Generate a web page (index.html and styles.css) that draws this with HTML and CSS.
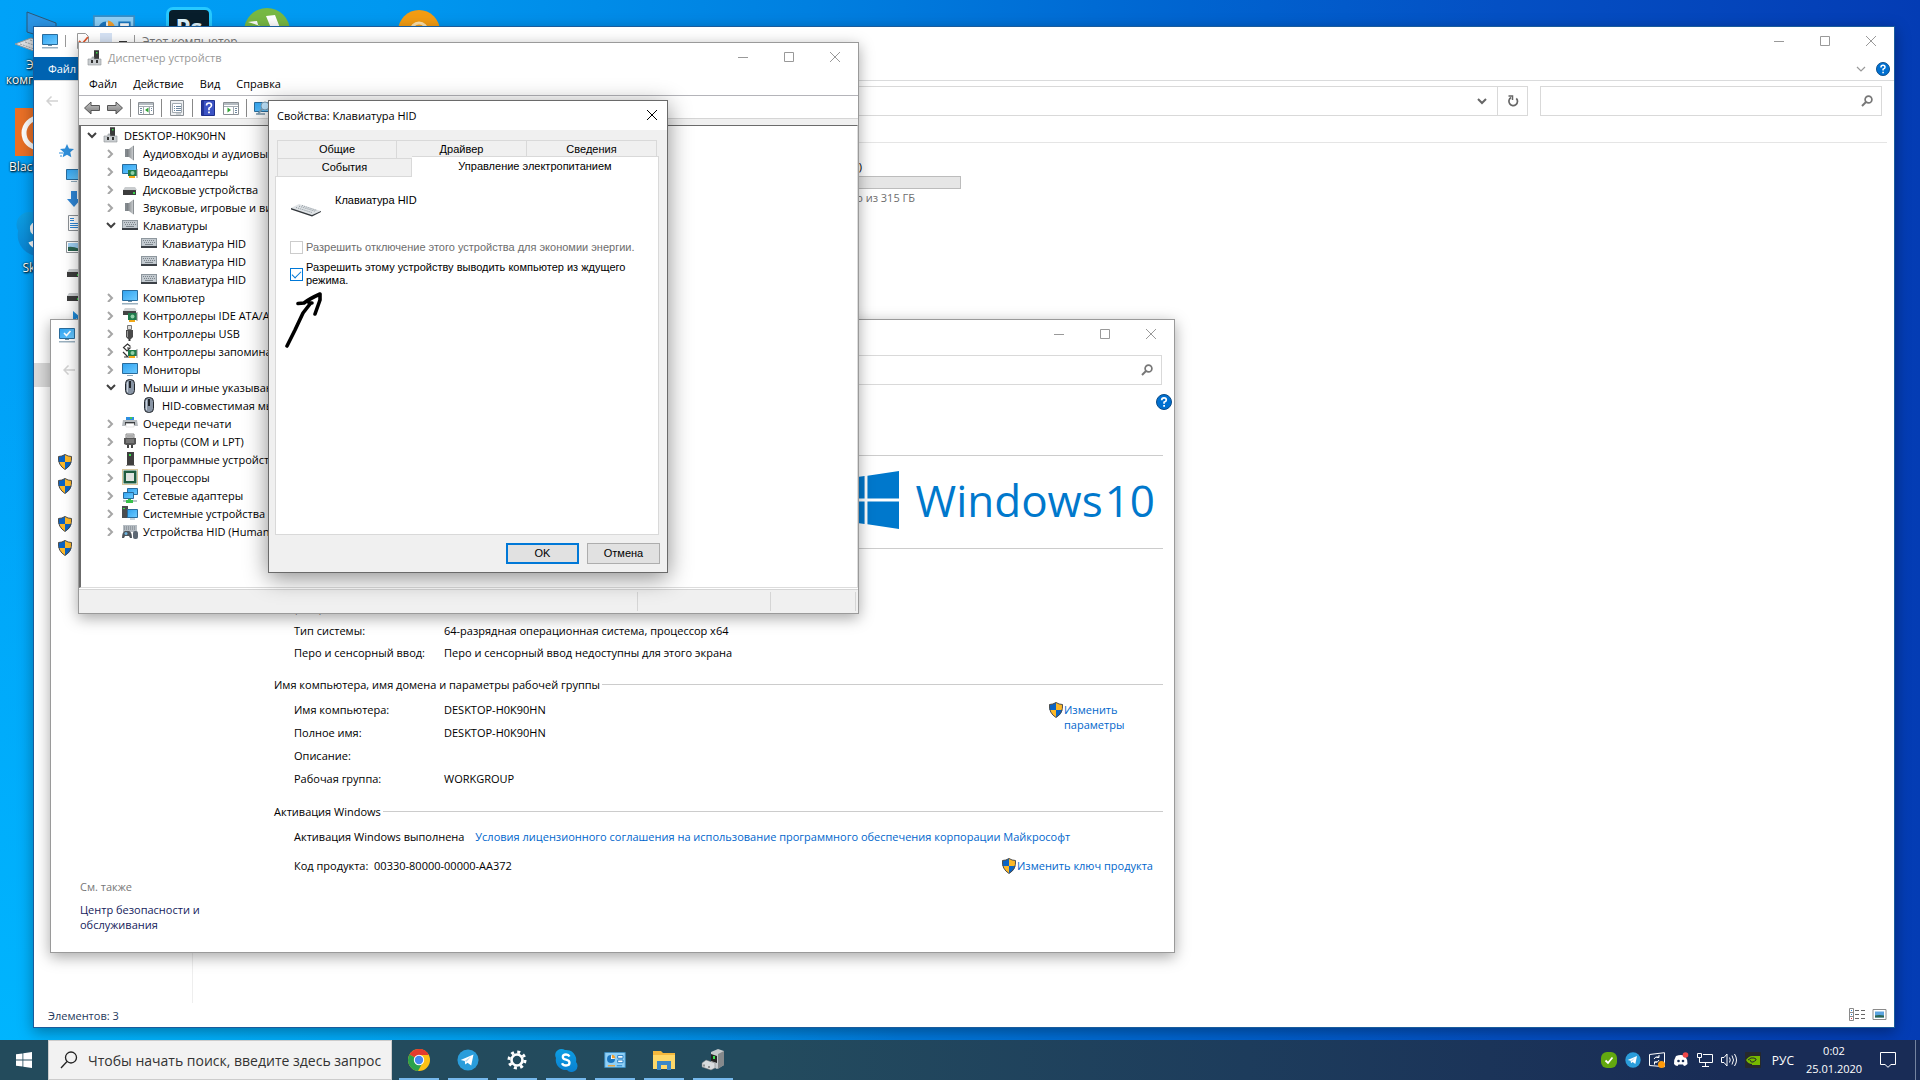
FILE: index.html
```html
<!DOCTYPE html>
<html lang="ru">
<head>
    <meta charset="UTF-8">
    <meta name="viewport" content="width=device-width, initial-scale=1.0">
    <title>Свойства: Клавиатура HID</title>
    <link rel="stylesheet" href="styles.css">
</head>
<body>
    <!-- Набор значков -->
    <svg class="sprite" aria-hidden="true">
        <defs>
            <linearGradient id="screen" x1="0" y1="0" x2="1" y2="1">
                <stop offset="0" stop-color="#2ea2f0"/>
                <stop offset="1" stop-color="#6fcbff"/>
            </linearGradient>
            <linearGradient id="metal" x1="0" y1="0" x2="1" y2="0">
                <stop offset="0" stop-color="#5a5f63"/>
                <stop offset="1" stop-color="#d5d8da"/>
            </linearGradient>
            <linearGradient id="grayArrow" x1="0" y1="0" x2="0" y2="1">
                <stop offset="0" stop-color="#c4c4c4"/>
                <stop offset="1" stop-color="#7a7a7a"/>
            </linearGradient>
            <linearGradient id="skypeBlue" x1="0" y1="0" x2="0" y2="1">
                <stop offset="0" stop-color="#0d9fe4"/>
                <stop offset="1" stop-color="#0a80d0"/>
            </linearGradient>
        </defs>
        <symbol id="i-min" viewBox="0 0 10 10"><path d="M0 5.500h10" stroke="currentColor" fill="none"/></symbol>
        <symbol id="i-max" viewBox="0 0 10 10"><path d="M.5.5h9v9h-9z" stroke="currentColor" fill="none"/></symbol>
        <symbol id="i-close" viewBox="0 0 10 10"><path d="M0 0l10 10M10 0L0 10" stroke="currentColor" fill="none"/></symbol>
        <symbol id="i-right" viewBox="0 0 10 10"><path d="M2 2l4 4-4 4" stroke="#a6a6a6" stroke-width="2" fill="none"/></symbol>
        <symbol id="i-down" viewBox="0 0 10 10"><path d="M1 3l4 4 4-4" stroke="currentColor" stroke-width="2" fill="none"/></symbol>
        <symbol id="i-chev" viewBox="0 0 10 10"><path d="M1 3l4 4 4-4" stroke="currentColor" stroke-width="1.2" fill="none"/></symbol>
        <symbol id="i-back" viewBox="0 0 12 10"><path d="M12 5H1M5.500.500L1 5l4.500 4.500" stroke="#d2d2d2" stroke-width="1.500" fill="none"/></symbol>
        <symbol id="i-find" viewBox="0 0 12 12"><circle cx="7.500" cy="4.500" r="3.400" stroke="#777" stroke-width="1.700" fill="none"/><path d="M5 7L1 11" stroke="#777" stroke-width="2"/></symbol>
        <symbol id="i-help" viewBox="0 0 16 16"><circle cx="8" cy="8" r="7.500" fill="#0070d0" stroke="#0a4a86"/><path d="M5.700 6.200Q5.700 3.800 8 3.800t2.300 2.100Q10.300 7.400 8.100 8.200v1.500" stroke="#fff" stroke-width="1.700" fill="none"/><path d="M7.200 11h1.800v1.800H7.200z" fill="#fff"/></symbol>
        <symbol id="i-refresh" viewBox="0 0 12 12"><path d="M4 2.600A4.300 4.300 0 1 0 9.300 3.300" stroke="#666" stroke-width="1.700" fill="none"/><path d="M1.500 1h4v4" stroke="#666" stroke-width="1.500" fill="none"/></symbol>
        <symbol id="i-devmgr" viewBox="0 0 16 16"><path d="M7 0h5v10H7z" fill="#3a3a3a"/><path d="M7 0h5v1H7z" fill="#6a6a6a"/><path d="M9 2h1.500v1.500H9z" fill="#3be04b"/><path d="M1 9h4V7h2v2h7v6H1z" fill="#c9cdd0" stroke="#8d9194" stroke-width=".6"/><path d="M4 10h2v3H4zM9 10h2v3H9z" fill="#333"/></symbol>
        <symbol id="i-speaker" viewBox="0 0 16 16"><path d="M3 4h4l5-4v16l-5-4H3z" fill="url(#metal)"/><path d="M6.500 4v8M11.500 1v14" stroke="#8a8f93" fill="none"/><path d="M3 4h2v8H3z" fill="#83898e"/></symbol>
        <symbol id="i-monitor" viewBox="0 0 16 16"><path d="M.5 2.500h15v10H.5z" fill="url(#screen)" stroke="#2a6c9c"/><path d="M5 14h6v1H5z" fill="#8da9bb"/></symbol>
        <symbol id="i-pc" viewBox="0 0 16 16"><path d="M.5 1.500h15v10H.5z" fill="url(#screen)" stroke="#2a6c9c"/><path d="M6 12h4v1H6z" fill="#6f8fa3"/><path d="M0 14h16v1.500H0z" fill="#9ab0bf"/></symbol>
        <symbol id="i-pccheck" viewBox="0 0 16 16"><path d="M.5 1.500h15v10H.5z" fill="url(#screen)" stroke="#2a6c9c"/><path d="M5 6l2.500 2.500L11.500 4" stroke="#fff" stroke-width="1.600" fill="none"/><path d="M6 12h4v1H6z" fill="#6f8fa3"/><path d="M0 14h16v1.500H0z" fill="#9ab0bf"/></symbol>
        <symbol id="i-video" viewBox="0 0 16 16"><path d="M.5 1.500h14v9H.5z" fill="url(#screen)" stroke="#2a6c9c"/><path d="M6 7h9v6H6z" fill="#1f7a4b"/><circle cx="10.500" cy="10" r="2" fill="#8fd0a8"/><path d="M15 6v9" stroke="#888"/><path d="M7 13h6v2H7z" fill="#f0a818"/></symbol>
        <symbol id="i-disk" viewBox="0 0 16 16"><path d="M3 6h10l2 3H1z" fill="#c9ccce"/><path d="M1 9h13v5H1z" fill="#3c3c3c"/><path d="M11 11h2v2h-2z" fill="#38d048"/></symbol>
        <symbol id="i-kbd" viewBox="0 0 16 16"><path d="M0 3h16v8H0z" fill="#c3cad0"/><path d="M0 11h16v2H0z" fill="#3b4046"/><path d="M.5 3v8M15.500 3v8M0 3.500h16" stroke="#8e979e"/><path d="M2 5.500h12M3 7.500h11" stroke="#7c858c" stroke-dasharray="1 1"/><path d="M4 9.500h8" stroke="#7c858c"/></symbol>
        <symbol id="i-ide" viewBox="0 0 16 16"><path d="M3 1h10l2 3H1z" fill="#d0d3d5"/><path d="M1 4h13v4H1z" fill="#444"/><path d="M6 6h9v7H6z" fill="#1f7a4b"/><circle cx="10.500" cy="9.500" r="2" fill="#8fd0a8"/><path d="M15 5v9" stroke="#888"/><path d="M7 13h6v2H7z" fill="#f0a818"/></symbol>
        <symbol id="i-usb" viewBox="0 0 16 16"><path d="M5.500.5h4v4h-4z" fill="#ddd" stroke="#777"/><path d="M4 5h7v7L9 14H6l-2-2z" fill="#4a4a4a"/><path d="M5.500 6v6" stroke="#999"/><path d="M6.500 14h2v2h-2z" fill="#333"/></symbol>
        <symbol id="i-storage" viewBox="0 0 16 16"><path d="M8.500 3.500L5.500 1 1.500 4.500 5 8l3-3H5M1 9l5 5H2" stroke="#333" stroke-width="1.200" fill="none"/><path d="M6 7h9v6H6z" fill="#1f7a4b"/><circle cx="10.500" cy="10" r="2" fill="#8fd0a8"/><path d="M15 6v9" stroke="#888"/><path d="M7 13h6v2H7z" fill="#f0a818"/></symbol>
        <symbol id="i-mouse" viewBox="0 0 16 16"><rect x="3.500" y=".5" width="9" height="15" rx="4" fill="#8995a5" stroke="#22262b"/><path d="M5.500 3v10" stroke="#c8d0d9"/><rect x="7" y="2" width="2" height="7" fill="#22262b"/></symbol>
        <symbol id="i-printer" viewBox="0 0 16 16"><path d="M4 2h8v3H4z" fill="#2d8fe0"/><path d="M8 2h2v2H8z" fill="#45c94f"/><path d="M1 5h14l1 6H0z" fill="#b6bbbf"/><path d="M3 7h10v3H3z" fill="#3a3d40"/><path d="M4 8.500h8V12H4z" fill="#fff" stroke="#ccc" stroke-width=".5"/></symbol>
        <symbol id="i-port" viewBox="0 0 16 16"><path d="M4 1h8v4H4z" fill="#e4e4e4" stroke="#888"/><path d="M6 2v2M8 2v2M10 2v2" stroke="#777"/><path d="M2 5h12v6l-2 1H4l-2-1z" fill="#555"/><path d="M4 7h8M4 9h8" stroke="#999"/><path d="M5 12h2v3H5zM9 12h2v3H9z" fill="#444"/></symbol>
        <symbol id="i-soft" viewBox="0 0 16 16"><path d="M5 1h7v13H5z" fill="#3f3f3f"/><path d="M7 3h2v2H7z" fill="#3be04b"/><path d="M4 14h9v1H4z" fill="#999"/></symbol>
        <symbol id="i-cpu" viewBox="0 0 16 16"><path d="M.5.5h15v15H.5z" fill="none" stroke="#b0903a" stroke-dasharray="1 1"/><path d="M1.500 1.500h13v13h-13z" fill="#1f5c40"/><path d="M4 4h8v8H4z" fill="#dfe3e0"/></symbol>
        <symbol id="i-net" viewBox="0 0 16 16"><path d="M5.500 1.500h10v6h-10z" fill="url(#screen)" stroke="#2a6c9c"/><path d="M1.500 5.500h10v6h-10z" fill="url(#screen)" stroke="#2a6c9c"/><path d="M1 14h14" stroke="#b9c4c9" stroke-width="2"/><path d="M6 12h3v1h2v3H4v-3h2z" fill="#38c04a"/></symbol>
        <symbol id="i-system" viewBox="0 0 16 16"><path d="M0 1h6v12H0z" fill="#4a4d50"/><path d="M1 3h2v1H1z" fill="#3be04b"/><path d="M5.500 4.500h10v8h-10z" fill="url(#screen)" stroke="#2a6c9c"/><path d="M8 14h5" stroke="#8da9bb"/></symbol>
        <symbol id="i-hid" viewBox="0 0 16 16"><path d="M1 2h14v7H1z" fill="#b6bdc3"/><path d="M2 4h12M2 6h12" stroke="#737b82" stroke-dasharray="1 1"/><path d="M0 15q0-6 3-7h4q3 1 3 7H8l-1-2H3l-1 2z" fill="#4d545b"/><circle cx="4" cy="10.500" r="1.500" fill="#6cb2dc"/><rect x="11" y="8" width="5" height="8" rx="2" fill="#5d6874"/></symbol>
        <symbol id="i-shield" viewBox="0 0 16 16"><path d="M8 .5q3 2 6.500 2Q15.300 11 8 15.500.7 11 1.500 2.500 5 2.500 8 .5z" fill="#fdb827"/><path d="M8 .5V8H1.500q-.4-3 0-5.500Q5 2.500 8 .5zM8 8h6.500Q13.500 12.500 8 15.500z" fill="#0a63c4"/><path d="M8 .5q3 2 6.500 2Q15.300 11 8 15.500.7 11 1.500 2.500 5 2.500 8 .5z" fill="none" stroke="#4d4d4d"/></symbol>
        <symbol id="i-tarrow" viewBox="0 0 16 16"><path d="M.5 8L7 2v3.500h8.500v5H7V14z" fill="url(#grayArrow)" stroke="#555"/></symbol>
        <symbol id="i-panel" viewBox="0 0 16 16"><path d="M.5 2.500h15v12H.5z" fill="#fff" stroke="#8a8f94"/><path d="M1 3h14v2H1z" fill="#b5bcc2"/><path d="M1 6.500h14M5.500 6v8M11.500 6v8" stroke="#a3abb2"/><path d="M2 8.500h2M2 10.500h2M2 12.500h2M13 8.500h1M13 10.500h1" stroke="#6f88a0"/><path d="M10.500 7.500v5L7 10z" fill="#2fa534"/></symbol>
        <symbol id="i-panel2" viewBox="0 0 16 16"><path d="M.5 2.500h15v12H.5z" fill="#fff" stroke="#8a8f94"/><path d="M1 3h14v2H1z" fill="#b5bcc2"/><path d="M1 6.500h14M10.500 6v8" stroke="#a3abb2"/><path d="M12 8.500h2M12 10.500h2M12 12.500h2" stroke="#6f88a0"/><path d="M4.500 7.500v5L8 10z" fill="#2fa534"/></symbol>
        <symbol id="i-props" viewBox="0 0 16 16"><path d="M1.500.5h13v15h-13z" fill="#eef0f2" stroke="#8a8f94"/><path d="M3.500 3.500h9v9h-9z" fill="#fff" stroke="#a3abb2"/><path d="M5 6.500h1M7 6.500h5M5 8.500h1M7 8.500h5M5 10.500h1M7 10.500h5" stroke="#6f88a0"/><path d="M7 14h5" stroke="#a3abb2"/></symbol>
        <symbol id="i-book" viewBox="0 0 14 16"><path d="M.5.500h13v15H.5z" fill="#3b53c4" stroke="#1e2f8c"/><path d="M1 1h2v14H1z" fill="#23369b"/><path d="M5.500 5.500Q5.500 3 8 3t2.500 2.300Q10.500 7 8 8.200v2" stroke="#fff" stroke-width="1.600" fill="none"/><path d="M7.100 11.500h1.800v1.800H7.100z" fill="#fff"/></symbol>
        <symbol id="i-scan" viewBox="0 0 16 16"><path d="M.5 2.500h15v9H.5z" fill="url(#screen)" stroke="#2a6c9c"/><path d="M2 14h9" stroke="#9ab0bf" stroke-width="2"/><circle cx="11" cy="6" r="4" fill="#bfe6ff" stroke="#7d9db2"/><path d="M8 9l-4 5" stroke="#7d9db2" stroke-width="2"/></symbol>
        <symbol id="i-doccheck" viewBox="0 0 12 16"><path d="M.5.5h8l3 3v12H.5z" fill="#fff" stroke="#999"/><path d="M2 8l3 3 6-7" stroke="#e0562b" stroke-width="1.800" fill="none"/></symbol>
        <symbol id="i-star" viewBox="0 0 16 16"><path d="M8 1l2 4.500 5 .500-3.700 3.300 1 5L8 11.700 3.700 14.300l1-5L1 6l5-.500z" fill="#2f8fdb"/><path d="M0 10h4M1 13h2" stroke="#2f8fdb"/></symbol>
        <symbol id="i-dl" viewBox="0 0 16 16"><path d="M5 0h6v8h4l-7 8-7-8h4z" fill="#2f86d6"/></symbol>
        <symbol id="i-doc" viewBox="0 0 16 16"><path d="M2.500.5h11v15h-11z" fill="#fff" stroke="#8a8f94"/><path d="M4 3.500h4M4 5.500h4M4 8.500h8M4 10.500h8M4 12.500h8" stroke="#2f86d6"/></symbol>
        <symbol id="i-pic" viewBox="0 0 16 16"><path d="M.5 2.500h15v11H.5z" fill="#fff" stroke="#8a8f94"/><path d="M2 4h12v8H2z" fill="#9fd0f4"/><path d="M2 12V8q4-1 12 2v2z" fill="#2c6450"/></symbol>
        <symbol id="i-note" viewBox="0 0 16 16"><path d="M7 0l7 6v5l-4-4v9H7z" fill="#1f8fe0"/></symbol>
        <symbol id="i-folder" viewBox="0 0 24 20"><path d="M1 1h8l2 2h12v16H1z" fill="#f5b83d"/><path d="M1 5h22v14H1z" fill="#ffd869"/><path d="M5 20v-9h14v9h-4v-5H9v5z" fill="#3a87c8"/></symbol>
        <symbol id="i-skype" viewBox="0 0 24 24"><path d="M7 1a6 6 0 0 1 4 1 10 10 0 0 1 11 12 6 6 0 0 1-9 8A10 10 0 0 1 2 10 6 6 0 0 1 7 1z" fill="url(#skypeBlue)"/><path d="M15.500 8.500Q14.500 6.500 12 6.500 8.800 6.500 8.800 9q0 2 3.200 2.700 3.500.8 3.500 3.100 0 2.700-3.500 2.700-3 0-4-2.300" stroke="#fff" stroke-width="2.300" fill="none"/></symbol>
        <symbol id="i-telegram" viewBox="0 0 24 24"><circle cx="12" cy="12" r="11.500" fill="#2a9ddb"/><path d="M4 12l14-6-2.500 12-4-3-2.500 2-.500-4z" fill="#fff"/><path d="M8.500 13l7-5-5 6" fill="#b8d9ee"/></symbol>
        <symbol id="i-win" viewBox="0 0 16 16"><path d="M0 2.300L6.500 1.400v6.200H0zM7.300 1.300L16 0v7.600H7.300zM0 8.400h6.500v6.200L0 13.700zM7.300 8.400H16V16l-8.700-1.300z" fill="currentColor"/></symbol>
        <symbol id="i-cpl" viewBox="0 0 24 18"><path d="M.5.5h23v17H.5z" fill="#8fd0f7" stroke="#3a8fc6"/><circle cx="7.500" cy="8" r="4" fill="#fff"/><path d="M7.500 8V3.500A4.500 4.500 0 1 0 12 8z" fill="#1b76bf"/><path d="M8.500 3a4.500 4.500 0 0 1 4 4h-4z" fill="#f0a030"/><path d="M15 4h6v3h-6zM15 9h6v3h-6z" fill="#fff" stroke="#1b76bf"/><path d="M4 15.500h8" stroke="#f0a030" stroke-width="1.500"/><path d="M14 15.500h6" stroke="#1b76bf"/></symbol>
    </svg>

    <div class="desktop">
        <!-- Ярлыки рабочего стола -->
        <div class="shortcut this-pc">
            <svg width="48" height="44" viewBox="0 0 48 44"><path d="M12 2l29 11v18L12 22z" fill="#2b95e6" stroke="#2d5878"/><path d="M0 34l16-6 24 8-16 7z" fill="#dfe3e6" stroke="#8e979e"/><path d="M5 34l20 7M10 32l20 7M15 30l20 7" stroke="#9aa3aa" stroke-dasharray="2 1"/></svg>
            <span>Этот<br>компьютер</span>
        </div>
        <div class="shortcut blackberry">
            <svg width="48" height="48" viewBox="0 0 48 48"><path d="M0 0h48v48H0z" fill="#ea7026"/><circle cx="24" cy="25" r="15" fill="none" stroke="#fff" stroke-width="5"/></svg>
            <span>BlackBerry</span>
        </div>
        <div class="shortcut skype">
            <svg width="50" height="50"><use href="#i-skype"/></svg>
            <span>Skype</span>
        </div>
        <div class="shortcut top-row">
            <svg width="42" height="32"><use href="#i-cpl"/></svg>
            <span class="ps">Ps</span>
            <svg width="48" height="48" viewBox="0 0 48 48"><circle cx="24" cy="24" r="23" fill="#77b843"/><path d="M5 15l9-1 4 14 12-2-7-17 9-1 7 18" fill="#fff"/></svg>
            <svg width="44" height="44" viewBox="0 0 44 44"><circle cx="22" cy="22" r="21" fill="#f39c12"/><circle cx="22" cy="22" r="8" fill="#f39c12" stroke="#fde3ae" stroke-width="3"/></svg>
        </div>

        <!-- Проводник -->
        <section class="window explorer">
            <header class="titlebar">
                <div class="quick">
                    <svg width="16" height="16"><use href="#i-pc"/></svg>
                    <i></i>
                    <svg class="qprops" width="12" height="16"><use href="#i-doccheck"/></svg>
                    <b class="newfolder"></b>
                    <b class="dash"></b>
                    <i></i>
                    <span>Этот компьютер</span>
                </div>
                <div class="controls">
                    <button aria-label="Свернуть"><svg><use href="#i-min"/></svg></button>
                    <button aria-label="Развернуть"><svg><use href="#i-max"/></svg></button>
                    <button aria-label="Закрыть"><svg><use href="#i-close"/></svg></button>
                </div>
            </header>
            <div class="ribbon">
                <button class="file">Файл</button>
                <div class="ribbon-end">
                    <svg width="10" height="10"><use href="#i-chev"/></svg>
                    <svg width="14" height="14"><use href="#i-help"/></svg>
                </div>
            </div>
            <div class="address-row">
                <button class="back" aria-label="Назад"><svg width="12" height="10"><use href="#i-back"/></svg></button>
                <div class="address">
                    <button class="drop" aria-label="Предыдущие расположения"><svg width="10" height="10"><use href="#i-down"/></svg></button>
                    <button class="refresh" aria-label="Обновить"><svg width="12" height="12"><use href="#i-refresh"/></svg></button>
                </div>
                <div class="search wide">
                    <input type="text" aria-label="Поиск">
                    <svg width="12" height="12"><use href="#i-find"/></svg>
                </div>
            </div>
            <div class="explorer-body">
                <ul class="nav">
                    <li class="first"><svg width="16" height="16"><use href="#i-star"/></svg></li>
                    <li><svg width="16" height="16"><use href="#i-monitor"/></svg></li>
                    <li><svg width="16" height="16"><use href="#i-dl"/></svg></li>
                    <li><svg width="16" height="16"><use href="#i-doc"/></svg></li>
                    <li><svg width="16" height="16"><use href="#i-pic"/></svg></li>
                    <li><svg width="16" height="16"><use href="#i-disk"/></svg></li>
                    <li><svg width="16" height="16"><use href="#i-disk"/></svg></li>
                    <li><svg width="16" height="16"><use href="#i-note"/></svg></li>
                    <li class="selected"></li>
                </ul>
                <div class="files">
                    <div class="drive">
                        <span class="drive-name">Локальный диск (D:)</span>
                        <div class="bar"></div>
                        <span class="drive-free">Свободно из 315 ГБ</span>
                    </div>
                </div>
            </div>
            <footer class="explorer-status">
                <span>Элементов: 3</span>
                <svg width="40" height="14" viewBox="0 0 40 14"><path d="M.5.500h4v12h-4zM0 4.500h5M0 8.500h5" fill="none" stroke="#8a8a8a"/><path d="M6 2.500h10M6 6.500h10M6 10.500h10" stroke="#666" stroke-dasharray="4 2"/><path d="M2 2h1v1H2zM2 6h1v1H2z" fill="#2f86d6"/><path d="M2 10h1v1H2z" fill="#d33"/><path d="M24 1.500h13v10H24z" fill="#fff" stroke="#8a8a8a"/><path d="M26 3.500h9v6h-9z" fill="#5aa3df"/><path d="M26 9.500v-2q4-1 9 0v2z" fill="#2c6450"/></svg>
            </footer>
        </section>

        <!-- Система -->
        <section class="window system">
            <header class="titlebar">
                <svg class="app" width="16" height="16"><use href="#i-pccheck"/></svg>
                <div class="controls">
                    <button aria-label="Свернуть"><svg><use href="#i-min"/></svg></button>
                    <button aria-label="Развернуть"><svg><use href="#i-max"/></svg></button>
                    <button aria-label="Закрыть"><svg><use href="#i-close"/></svg></button>
                </div>
            </header>
            <div class="system-nav">
                <button class="back" aria-label="Назад"><svg width="12" height="10"><use href="#i-back"/></svg></button>
                <div class="search">
                    <input type="text" aria-label="Поиск в панели управления">
                    <svg width="12" height="12"><use href="#i-find"/></svg>
                </div>
            </div>
            <div class="system-body">
                <aside>
                    <ul class="tasks">
                        <li><svg width="16" height="16"><use href="#i-shield"/></svg></li>
                        <li class="two-line"><svg width="16" height="16"><use href="#i-shield"/></svg></li>
                        <li><svg width="16" height="16"><use href="#i-shield"/></svg></li>
                        <li><svg width="16" height="16"><use href="#i-shield"/></svg></li>
                    </ul>
                    <div class="see-also">
                        <p>См. также</p>
                        <a href="#">Центр безопасности и обслуживания</a>
                    </div>
                </aside>
                <main>
                    <a class="help" href="#" aria-label="Справка"><svg width="16" height="16"><use href="#i-help"/></svg></a>
                    <div class="edition">
                        <svg width="60" height="58"><use href="#i-win"/></svg>
                        <span>Windows<b>10</b></span>
                    </div>
                    <dl class="facts hardware">
                        <dt>Процессор:</dt><dd></dd>
                        <dt class="ram">Установленная память<br>(ОЗУ):</dt><dd></dd>
                        <dt>Тип системы:</dt><dd>64-разрядная операционная система, процессор x64</dd>
                        <dt>Перо и сенсорный ввод:</dt><dd>Перо и сенсорный ввод недоступны для этого экрана</dd>
                    </dl>
                    <h2><span>Имя компьютера, имя домена и параметры рабочей группы</span></h2>
                    <div class="names">
                        <dl class="facts">
                            <dt>Имя компьютера:</dt><dd>DESKTOP-H0K90HN</dd>
                            <dt>Полное имя:</dt><dd>DESKTOP-H0K90HN</dd>
                            <dt>Описание:</dt><dd></dd>
                            <dt>Рабочая группа:</dt><dd>WORKGROUP</dd>
                        </dl>
                        <a class="shield-link" href="#"><svg width="16" height="16"><use href="#i-shield"/></svg><span>Изменить<br>параметры</span></a>
                    </div>
                    <h2><span>Активация Windows</span></h2>
                    <p class="activation">Активация Windows выполнена <a href="#">Условия лицензионного соглашения на использование программного обеспечения корпорации Майкрософт</a></p>
                    <div class="product">
                        <span>Код продукта:&nbsp; 00330-80000-00000-AA372</span>
                        <a class="shield-link" href="#"><svg width="16" height="16"><use href="#i-shield"/></svg><span>Изменить ключ продукта</span></a>
                    </div>
                </main>
            </div>
        </section>

        <!-- Диспетчер устройств -->
        <section class="window devices">
            <header class="titlebar">
                <svg class="app" width="16" height="16"><use href="#i-devmgr"/></svg>
                <h1>Диспетчер устройств</h1>
                <div class="controls">
                    <button aria-label="Свернуть"><svg><use href="#i-min"/></svg></button>
                    <button aria-label="Развернуть"><svg><use href="#i-max"/></svg></button>
                    <button aria-label="Закрыть"><svg><use href="#i-close"/></svg></button>
                </div>
            </header>
            <nav class="menu">
                <button>Файл</button>
                <button>Действие</button>
                <button>Вид</button>
                <button>Справка</button>
            </nav>
            <div class="toolbar">
                <button aria-label="Назад"><svg width="16" height="16"><use href="#i-tarrow"/></svg></button>
                <button class="forward" aria-label="Вперед"><svg width="16" height="16"><use href="#i-tarrow"/></svg></button>
                <i></i>
                <button aria-label="Дерево консоли"><svg width="16" height="16"><use href="#i-panel"/></svg></button>
                <i></i>
                <button aria-label="Свойства"><svg width="16" height="16"><use href="#i-props"/></svg></button>
                <i></i>
                <button aria-label="Справка"><svg width="16" height="16"><use href="#i-book"/></svg></button>
                <button aria-label="Область действий"><svg width="16" height="16"><use href="#i-panel2"/></svg></button>
                <i></i>
                <button aria-label="Обновить конфигурацию"><svg width="16" height="16"><use href="#i-scan"/></svg></button>
            </div>
            <ul class="tree">
                <li class="root"><svg class="tw"><use href="#i-down"/></svg><svg class="ic"><use href="#i-devmgr"/></svg>DESKTOP-H0K90HN</li>
                <li><svg class="tw"><use href="#i-right"/></svg><svg class="ic"><use href="#i-speaker"/></svg>Аудиовходы и аудиовыходы</li>
                <li><svg class="tw"><use href="#i-right"/></svg><svg class="ic"><use href="#i-video"/></svg>Видеоадаптеры</li>
                <li><svg class="tw"><use href="#i-right"/></svg><svg class="ic"><use href="#i-disk"/></svg>Дисковые устройства</li>
                <li><svg class="tw"><use href="#i-right"/></svg><svg class="ic"><use href="#i-speaker"/></svg>Звуковые, игровые и видеоустройства</li>
                <li><svg class="tw"><use href="#i-down"/></svg><svg class="ic"><use href="#i-kbd"/></svg>Клавиатуры</li>
                <li class="leaf"><svg class="ic"><use href="#i-kbd"/></svg>Клавиатура HID</li>
                <li class="leaf"><svg class="ic"><use href="#i-kbd"/></svg>Клавиатура HID</li>
                <li class="leaf"><svg class="ic"><use href="#i-kbd"/></svg>Клавиатура HID</li>
                <li><svg class="tw"><use href="#i-right"/></svg><svg class="ic"><use href="#i-pc"/></svg>Компьютер</li>
                <li><svg class="tw"><use href="#i-right"/></svg><svg class="ic"><use href="#i-ide"/></svg>Контроллеры IDE ATA/ATAPI</li>
                <li><svg class="tw"><use href="#i-right"/></svg><svg class="ic"><use href="#i-usb"/></svg>Контроллеры USB</li>
                <li><svg class="tw"><use href="#i-right"/></svg><svg class="ic"><use href="#i-storage"/></svg>Контроллеры запоминающих устройств</li>
                <li><svg class="tw"><use href="#i-right"/></svg><svg class="ic"><use href="#i-monitor"/></svg>Мониторы</li>
                <li><svg class="tw"><use href="#i-down"/></svg><svg class="ic"><use href="#i-mouse"/></svg>Мыши и иные указывающие устройства</li>
                <li class="leaf"><svg class="ic"><use href="#i-mouse"/></svg>HID-совместимая мышь</li>
                <li><svg class="tw"><use href="#i-right"/></svg><svg class="ic"><use href="#i-printer"/></svg>Очереди печати</li>
                <li><svg class="tw"><use href="#i-right"/></svg><svg class="ic"><use href="#i-port"/></svg>Порты (COM и LPT)</li>
                <li><svg class="tw"><use href="#i-right"/></svg><svg class="ic"><use href="#i-soft"/></svg>Программные устройства</li>
                <li><svg class="tw"><use href="#i-right"/></svg><svg class="ic"><use href="#i-cpu"/></svg>Процессоры</li>
                <li><svg class="tw"><use href="#i-right"/></svg><svg class="ic"><use href="#i-net"/></svg>Сетевые адаптеры</li>
                <li><svg class="tw"><use href="#i-right"/></svg><svg class="ic"><use href="#i-system"/></svg>Системные устройства</li>
                <li><svg class="tw"><use href="#i-right"/></svg><svg class="ic"><use href="#i-hid"/></svg>Устройства HID (Human Interface Devices)</li>
            </ul>
            <footer class="devices-status"><span></span><span></span><span></span></footer>
        </section>

        <!-- Свойства клавиатуры -->
        <section class="window dialog">
            <header class="titlebar">
                <h1>Свойства: Клавиатура HID</h1>
                <div class="controls">
                    <button aria-label="Закрыть"><svg><use href="#i-close"/></svg></button>
                </div>
            </header>
            <div class="tabs back-row">
                <button>Общие</button>
                <button>Драйвер</button>
                <button>Сведения</button>
            </div>
            <div class="tabs front-row">
                <button>События</button>
                <button class="active">Управление электропитанием</button>
            </div>
            <div class="page">
                <div class="device">
                    <svg width="32" height="32" viewBox="0 0 32 32"><path d="M1 12l8-4 22 7-9 4z" fill="#dfe3e6"/><path d="M1 12l21 7 9-4v1l-9 4.500L1 13.500z" fill="#33383d"/><path d="M6 11.500l16 5M9 10.200l16 5M12 9.500l15 5" stroke="#8e979e" stroke-dasharray="1 1"/></svg>
                    <span>Клавиатура HID</span>
                </div>
                <label class="check disabled"><input type="checkbox" disabled><span>Разрешить отключение этого устройства для экономии энергии.</span></label>
                <label class="check"><input type="checkbox" checked><span>Разрешить этому устройству выводить компьютер из ждущего режима.</span></label>
                <svg class="pointer" width="40" height="60" viewBox="0 0 40 60"><path d="M2 54L10 38 18 21 25 12M13 11.500l6-.5Q24 7 35 2M27 11l-3 0M35 2v6l-5 14" fill="none" stroke="#000" stroke-width="3.600" stroke-linecap="round" stroke-linejoin="round"/></svg>
            </div>
            <div class="actions">
                <button class="default">OK</button>
                <button>Отмена</button>
            </div>
        </section>

        <!-- Панель задач -->
        <footer class="taskbar">
            <button class="start" aria-label="Пуск"><svg width="16" height="16"><use href="#i-win"/></svg></button>
            <div class="task-search">
                <svg width="18" height="18" viewBox="0 0 18 18"><circle cx="11" cy="6.500" r="5.500" fill="none" stroke="#222" stroke-width="1.300"/><path d="M7 10.500L1 17" stroke="#222" stroke-width="1.300"/></svg>
                <input type="text" aria-label="Поиск" placeholder="Чтобы начать поиск, введите здесь запрос">
            </div>
            <div class="apps">
                <button aria-label="Chrome"><svg width="22" height="22" viewBox="0 0 22 22"><circle cx="11" cy="11" r="11" fill="#fbc116"/><path d="M11 11L1.500 5.500a11 11 0 0 1 19 0z" fill="#e33b2e"/><path d="M11 11L1.500 5.500A11 11 0 0 0 10 22l5-9z" fill="#2ba24c"/><path d="M11 5.500h9.500L16 13z" fill="#fbc116"/><path d="M11 0v6h9.500A11 11 0 0 0 11 0z" fill="#e33b2e"/><circle cx="11" cy="11" r="5.200" fill="#fff"/><circle cx="11" cy="11" r="4.200" fill="#4588f2"/></svg></button>
                <button aria-label="Telegram"><svg width="22" height="22"><use href="#i-telegram"/></svg></button>
                <button aria-label="Параметры"><svg width="20" height="20" viewBox="0 0 20 20"><circle cx="10" cy="10" r="5.500" fill="none" stroke="#fff" stroke-width="2.600"/><circle cx="10" cy="10" r="8" fill="none" stroke="#fff" stroke-width="3" stroke-dasharray="3 3.283"/></svg></button>
                <button aria-label="Skype"><svg width="24" height="24"><use href="#i-skype"/></svg></button>
                <button aria-label="Панель управления"><svg width="22" height="16"><use href="#i-cpl"/></svg></button>
                <button aria-label="Проводник"><svg width="24" height="20"><use href="#i-folder"/></svg></button>
                <button aria-label="Диспетчер устройств"><svg width="24" height="22" viewBox="0 0 24 22"><path d="M10 3l7-3 6 2v14l-7 4-6-3z" fill="#c6cacd"/><path d="M17 5l6-3v14l-6 4z" fill="#85898c"/><path d="M10 5l6 2v7l-6-2z" fill="#222"/><path d="M12 7h2v3h-2z" fill="#3be04b"/><path d="M1 14l4-3 9 3v5l-4 2-9-3z" fill="#d9dcde" stroke="#777" stroke-width=".5"/><path d="M3 15.500v2M8 17v2" stroke="#777" stroke-width="1.500"/></svg></button>
            </div>
            <div class="tray">
                <svg width="16" height="16" viewBox="0 0 16 16"><rect width="16" height="16" rx="6" fill="#62a80f"/><path d="M4.500 8.500L7 11l4.500-5.500" stroke="#fff" stroke-width="1.800" fill="none"/></svg>
                <svg width="16" height="16"><use href="#i-telegram"/></svg>
                <svg width="16" height="16" viewBox="0 0 16 16"><path d="M.500 2.500L15.500.700v14L.500 13.500z" fill="none" stroke="#fff"/><path d="M5 7q1-3 5-2M10 3v2.500H7.500M10 8q-1 3-4.500 2M5.500 12.500V10H8" fill="none" stroke="#fff"/><circle cx="12.500" cy="12.500" r="3.500" fill="#ff9a0a"/></svg>
                <svg width="16" height="16" viewBox="0 0 16 16"><path d="M3 4q5-2 9 0 3 4 2.500 8-2 2-3.500 2l-1-1.500H5.500l-1 1.500Q2.500 14 1 12 .500 8 3 4z" fill="#fff"/><circle cx="5.500" cy="9" r="1.300" fill="#1b3057"/><circle cx="10" cy="9" r="1.300" fill="#1b3057"/><circle cx="12.500" cy="3" r="2.800" fill="#f04747"/></svg>
                <svg width="16" height="16" viewBox="0 0 16 16"><path d="M6 2.500h9.500v8h-13V7M5 14.500h7M8.500 11v3M.500 1.500h4v4h-4zM2.500 5v2" fill="none" stroke="#fff"/></svg>
                <svg width="16" height="16" viewBox="0 0 16 16"><path d="M.500 5.500h2.500l3-3.500v12l-3-3.500H.500zM8.500 5.500q1.500 2.500 0 5M11 3.500q3 4.500 0 9M13.500 2q4 6 0 12" fill="none" stroke="#fff"/></svg>
                <svg width="16" height="16" viewBox="0 0 16 16"><rect width="16" height="16" rx="1" fill="#26292c"/><path d="M1 8q3-4 6-4V4h8v9H7v-1Q3 12 1 8z" fill="#76b900"/><path d="M3 8q3-3 6-2t2 2-3 2-3-2" fill="none" stroke="#26292c"/></svg>
                <span class="lang">РУС</span>
                <time class="clock">0:02<br>25.01.2020</time>
                <button class="notify" aria-label="Уведомления"><svg width="16" height="16" viewBox="0 0 16 16"><path d="M.500.500h15v12H11L8 15.300 5 12.500H.500z" fill="none" stroke="#fff"/></svg></button>
            </div>
        </footer>
    </div>
</body>
</html>
```
FILE: styles.css
```css
* {
    box-sizing: border-box;
}
body {
    margin: 0;
    font: 11px/15px "Open Sans", "Noto Sans", sans-serif;
    color: #000;
}
h1, h2, p, ul, dl, dd {
    margin: 0;
    padding: 0;
    font-size: inherit;
    font-weight: normal;
}
ul {
    list-style: none;
}
button, input {
    font: inherit;
    color: inherit;
    padding: 0;
    border: 0;
    background: none;
}
svg {
    flex: none;
}
a {
    color: #0066cc;
    text-decoration: none;
}
.sprite {
    position: absolute;
    width: 0;
    height: 0;
}
.desktop {
    position: relative;
    height: 100vh;
    overflow: hidden;
    background:
        radial-gradient(ellipse 900px 700px at 0 100%, rgba(0, 184, 255, 0.9), rgba(0, 180, 255, 0)),
        linear-gradient(to right, #00a2f8 0%, #0098f0 20%, #0080e0 42%, #0064d0 62%, #0450c4 78%, #043cb4 100%);
}

/* Ярлыки */
.shortcut {
    position: absolute;
    display: flex;
    flex-direction: column;
    align-items: center;
    gap: 3px;
    width: 78px;
    color: #fff;
    font-size: 12px;
    text-align: center;
    text-shadow: 1px 1px 2px #000, 0 0 2px #000;
}
.this-pc { left: 0; top: 10px; }
.blackberry { left: 0; top: 108px; }
.skype { left: 0; top: 210px; gap: 0; }
.top-row {
    left: 93px;
    top: 7px;
    width: auto;
    flex-direction: row;
    align-items: flex-start;
    gap: 31px;
}
.top-row svg:first-child { margin-top: 8px; }
.top-row svg:last-child { margin: 2px 0 0 75px; }
.ps {
    width: 46px;
    height: 46px;
    border: 3px solid #26c9ff;
    border-radius: 7px;
    background: #081e2c;
    color: #e0f6ff;
    font-size: 24px;
    font-weight: bold;
    line-height: 34px;
    text-shadow: none;
}

/* Окна */
.window {
    position: absolute;
    display: flex;
    flex-direction: column;
    background: #fff;
    border: 1px solid #9a9a9a;
    box-shadow: 0 4px 14px rgba(0, 0, 0, 0.35);
}
.titlebar {
    display: flex;
    align-items: center;
    height: 29px;
    color: #999;
}
.titlebar .app {
    margin: 0 5px 0 8px;
}
.titlebar h1, .quick, .controls {
    padding-bottom: 1px;
}
.controls {
    display: flex;
    margin-left: auto;
}
.controls button {
    display: flex;
    align-items: center;
    justify-content: center;
    width: 46px;
    height: 28px;
}
.controls svg {
    width: 10px;
    height: 10px;
}
.search {
    display: flex;
    align-items: center;
    height: 30px;
    padding-right: 8px;
    border: 1px solid #d9d9d9;
}
.search input {
    flex: 1;
    min-width: 0;
}
.back svg {
    display: block;
}

/* Проводник */
.explorer {
    left: 33px;
    right: 25px;
    top: 26px;
    bottom: 52px;
    border-color: #1a5c9c;
}
.quick {
    display: flex;
    align-items: center;
    gap: 7px;
    padding-left: 8px;
    color: #777;
    font-size: 12px;
}
.quick i {
    width: 1px;
    height: 12px;
    background: #999;
}
.qprops, .newfolder {
    margin-left: 4px;
}
.newfolder {
    width: 12px;
    height: 16px;
    background: #d5e2f4;
}
.dash {
    width: 8px;
    height: 1px;
    background: #333;
}
.ribbon {
    display: flex;
    align-items: center;
    justify-content: space-between;
    height: 25px;
    padding-top: 1px;
    border-bottom: 1px solid #dadbdc;
}
.file {
    width: 56px;
    height: 23px;
    background: #0063b1;
    color: #fff;
}
.ribbon-end {
    display: flex;
    align-items: center;
    gap: 10px;
    padding-right: 4px;
    color: #999;
}
.address-row {
    display: flex;
    align-items: center;
    padding: 5px 12px 0;
}
.address-row .back {
    width: 122px;
}
.address {
    display: flex;
    flex: 1;
    justify-content: flex-end;
    height: 30px;
    border: 1px solid #d9d9d9;
    color: #666;
}
.address button {
    display: flex;
    align-items: center;
    justify-content: center;
    width: 30px;
}
.address .refresh {
    border-left: 1px solid #d9d9d9;
}
.search.wide {
    width: 342px;
    margin-left: 12px;
}
.explorer-body {
    display: flex;
    flex: 1;
    min-height: 0;
}
.nav {
    width: 159px;
    padding-top: 23px;
    border-right: 1px solid #eee;
}
.nav li {
    display: flex;
    align-items: center;
    height: 24px;
    padding-left: 32px;
}
.nav .first {
    padding-left: 25px;
}
.nav .selected {
    margin-top: 32px;
    background: #d9d9d9;
}
.files {
    flex: 1;
    margin: 26px 7px 0 0;
    border-top: 1px solid #e5e5e5;
    padding: 16px 0 0 561px;
}
.drive {
    display: flex;
    flex-direction: column;
    align-items: flex-end;
    width: 207px;
    white-space: nowrap;
}
.drive-name {
    margin-right: 99px;
}
.bar {
    width: 100%;
    height: 13px;
    margin: 2px 0 1px;
    background: #e6e6e6;
    border: 1px solid #bcbcbc;
}
.drive-free {
    margin-right: 46px;
    color: #6d6d6d;
}
.explorer-status {
    display: flex;
    align-items: center;
    justify-content: space-between;
    height: 24px;
    padding: 0 5px 0 14px;
    color: #1e395b;
}

/* Система */
.system {
    left: 50px;
    top: 319px;
    width: 1125px;
    height: 634px;
}
.system-nav {
    display: flex;
    align-items: center;
    justify-content: space-between;
    padding: 6px 12px 0;
}
.system-nav .search {
    width: 320px;
}
.system-body {
    display: flex;
    flex: 1;
    padding-right: 11px;
}
aside {
    display: flex;
    flex-direction: column;
    width: 223px;
    padding: 65px 50px 20px 6px;
}
.tasks li {
    display: flex;
    height: 24px;
    padding-top: 4px;
}
.tasks .two-line {
    height: 38px;
}
.see-also {
    margin-top: auto;
    padding-left: 23px;
    color: #777;
}
.see-also a {
    display: block;
    margin-top: 8px;
    color: #151c5c;
}
main {
    display: flex;
    flex: 1;
    flex-direction: column;
}
.help {
    align-self: flex-end;
    height: 16px;
    margin: 9px -9px 45px 0;
}
.edition {
    display: flex;
    justify-content: flex-end;
    height: 94px;
    padding: 15px 8px 0 0;
    gap: 16px;
    border-top: 1px solid #ccc;
    border-bottom: 1px solid #ccc;
    color: #0078cc;
}
.edition span {
    font-size: 44px;
    line-height: 58px;
}
.edition b {
    margin-left: 2px;
    font-weight: normal;
}
.facts {
    display: grid;
    grid-template-columns: 150px auto;
    grid-auto-rows: 23px;
    align-items: center;
    justify-content: start;
    padding-left: 20px;
}
.hardware {
    grid-template-rows: 23px 37px;
    padding-top: 10px;
    grid-auto-rows: 22px;
}
h2 {
    display: flex;
    align-items: center;
    gap: 2px;
    margin: 14px 0 6px;
}
h2::after {
    content: "";
    flex: 1;
    height: 1px;
    background: #ccc;
}
.names {
    display: flex;
    justify-content: space-between;
}
.shield-link {
    display: flex;
}
.names .shield-link {
    width: 115px;
    padding-top: 4px;
}
.activation {
    padding: 4px 0 0 20px;
}
.activation a {
    margin-left: 8px;
}
.product {
    display: flex;
    justify-content: space-between;
    padding: 14px 10px 0 20px;
}

/* Диспетчер устройств */
.devices {
    left: 78px;
    top: 42px;
    width: 781px;
    height: 572px;
}
.menu {
    display: flex;
    gap: 16px;
    height: 24px;
    padding-left: 10px;
    border-bottom: 1px solid #b4b4b9;
}
.toolbar {
    display: flex;
    align-items: center;
    gap: 7px;
    height: 23px;
    padding: 1px 0 0 5px;
    border-bottom: 1px solid #d5d5d5;
}
.toolbar button {
    height: 16px;
}
.toolbar button svg {
    display: block;
}
.toolbar i {
    width: 1px;
    height: 18px;
    background: #888;
}
.forward {
    transform: scaleX(-1);
}
.tree {
    flex: 1;
    margin-top: 6px;
    border: solid #6b6b6b;
    border-width: 1px 1px 1px 2px;
    border-right-color: #dcdcdc;
    border-bottom-color: #dcdcdc;
    box-shadow: 0 -6px 0 #f0f0f0;
    overflow: hidden;
    white-space: nowrap;
}
.tree li {
    display: flex;
    align-items: center;
    height: 18px;
    padding-left: 25px;
}
.tree .root {
    padding-left: 6px;
}
.tree .leaf {
    padding-left: 60px;
}
.tw {
    width: 10px;
    height: 10px;
    margin-right: 6px;
    color: #404040;
}
.ic {
    width: 16px;
    height: 16px;
    margin-right: 5px;
}
.devices-status {
    display: flex;
    height: 24px;
    margin-top: 1px;
    padding: 2px;
    background: #f0f0f0;
    border-top: 1px solid #d5d5d5;
}
.devices-status span {
    flex: 1;
    border-right: 1px solid #d5d5d5;
}
.devices-status span:nth-child(2) {
    flex: 0 0 133px;
}
.devices-status span:nth-child(3) {
    flex: 0 0 85px;
}

/* Свойства */
.dialog {
    left: 268px;
    top: 100px;
    width: 400px;
    height: 473px;
    padding: 0 8px 0 6px;
    background: #f0f0f0;
    border-color: #6a6a6a;
    box-shadow: 0 5px 22px rgba(0, 0, 0, 0.45);
    font-family: "Liberation Sans", Arial, sans-serif;
    line-height: 13px;
}
.dialog .titlebar {
    margin: 0 -8px 10px -6px;
    padding-left: 8px;
    background: #fff;
    color: #000;
    font-family: "Open Sans", "Noto Sans", sans-serif;
}
.dialog .controls button {
    width: 30px;
}
.tabs {
    display: flex;
    margin: 0 2px;
}
.tabs button {
    flex: 1;
    height: 18px;
    background: #f0f0f0;
    border: solid #d9d9d9;
    border-width: 1px 1px 0 0;
}
.tabs button:first-child {
    flex: 0 0 120px;
    border-left-width: 1px;
}
.front-row {
    margin-right: 0;
}
.tabs.front-row button:first-child {
    flex-basis: 135px;
}
.tabs .active {
    position: relative;
    height: 21px;
    margin: -2px 0 -1px;
    padding-bottom: 2px;
    background: #fff;
}
.page {
    flex: 1;
    padding: 17px 14px 0;
    background: #fff;
    border: 1px solid #d9d9d9;
}
.device {
    display: flex;
    height: 47px;
    gap: 13px;
}
.device svg {
    margin-top: 2px;
}
.check {
    display: flex;
    align-items: center;
    gap: 3px;
    margin-bottom: 7px;
}
.check.disabled {
    color: #6d6d6d;
}
.check span {
    margin-right: -8px;
}
.check input {
    appearance: none;
    flex: none;
    width: 13px;
    height: 13px;
    margin: 0;
    border: 1px solid #ccc;
    background: #fff;
}
.check input:checked {
    border-color: #0078d7;
}
.check input:checked::after {
    content: "";
    display: block;
    width: 8px;
    height: 4px;
    margin: 2px 0 0 1px;
    border: solid #0078d7;
    border-width: 0 0 1px 1px;
    transform: rotate(-45deg);
}
.pointer {
    display: block;
    margin: -2px 0 0 -5px;
}
.actions {
    display: flex;
    justify-content: flex-end;
    gap: 8px;
    margin-right: -1px;
    padding: 8px 0;
}
.actions button {
    width: 73px;
    height: 21px;
    background: #e1e1e1;
    border: 1px solid #adadad;
}
.actions .default {
    border: 2px solid #0078d7;
}

/* Панель задач */
.taskbar {
    position: absolute;
    left: 0;
    right: 0;
    bottom: 0;
    display: flex;
    align-items: center;
    height: 40px;
    background: linear-gradient(to right, #234b5c 0%, #234b5e 40%, #1d3c5c 65%, #192c56 90%);
    color: #fff;
}
.start {
    width: 48px;
    height: 40px;
}
.start svg {
    display: block;
    margin: 0 auto;
}
.task-search {
    display: flex;
    align-items: center;
    gap: 10px;
    width: 344px;
    height: 40px;
    padding: 0 4px 0 11px;
    background: #f2f2f2;
    border: 1px solid #ccc;
}
.task-search input {
    flex: 1;
    min-width: 0;
    font-size: 14px;
}
.task-search input::placeholder {
    color: #333;
}
.apps {
    display: flex;
    gap: 9px;
    padding-left: 7px;
}
.apps button {
    display: flex;
    align-items: center;
    justify-content: center;
    width: 40px;
    height: 40px;
    padding-top: 2px;
    border-bottom: 2px solid #76b9ed;
}
.tray {
    display: flex;
    align-items: center;
    gap: 8px;
    height: 40px;
    margin-left: auto;
    margin-right: 4px;
    padding-right: 19px;
    border-right: 1px solid #7484a0;
}
.lang {
    margin-left: 3px;
    font-size: 12px;
}
.clock {
    width: 64px;
    text-align: center;
    line-height: 18px;
}
.notify {
    height: 16px;
    margin-left: 6px;
}
.notify svg {
    display: block;
}
```
